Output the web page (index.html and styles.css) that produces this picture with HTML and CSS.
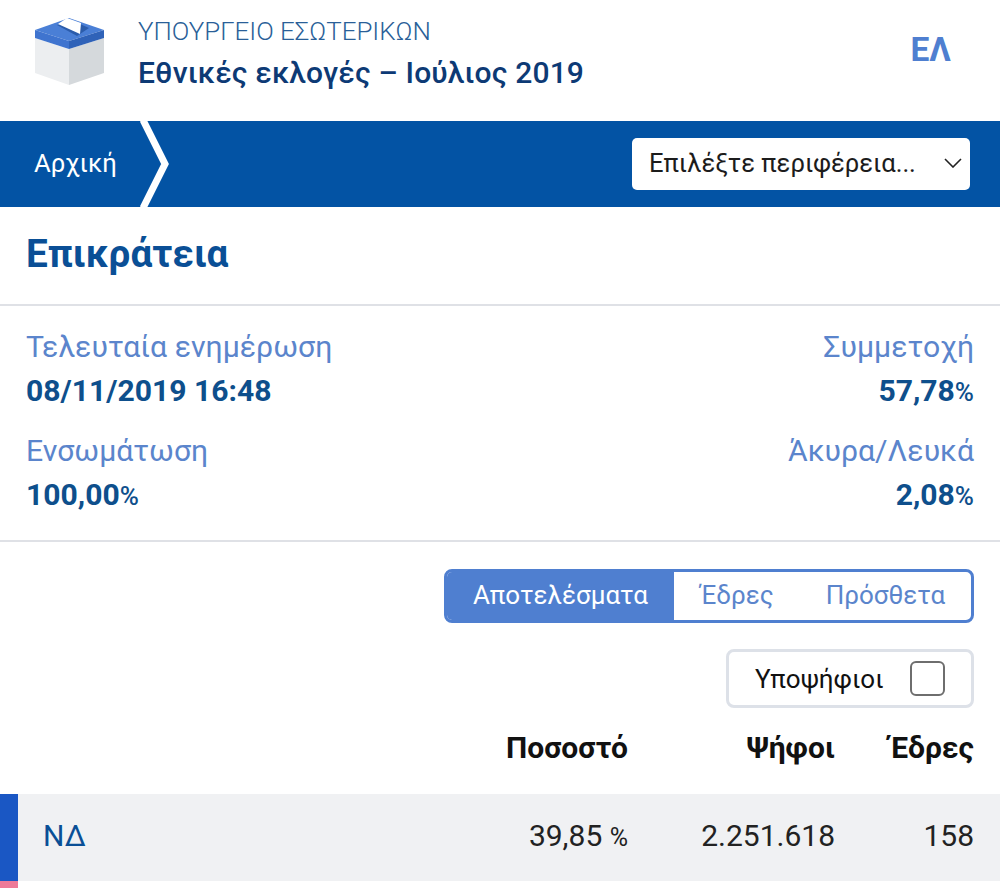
FILE: index.html
```html
<!DOCTYPE html>
<html lang="el">
<head>
<meta charset="utf-8">
<title>Εθνικές εκλογές – Ιούλιος 2019</title>
<link rel="stylesheet" href="styles.css">
</head>
<body>
<header class="top">
  <svg class="logo" width="70" height="90" viewBox="0 0 70 90">
    <path d="M0 38 L34 49 V85 L0 73 Z" fill="#eceef0"/>
    <path d="M34 49 L69 38 V73 L34 85 Z" fill="#d5d9dc"/>
    <path d="M0 30 L34 18 L69 30 L34 41 Z" fill="#4a7fd6"/>
    <path d="M0 30 L34 41 V49 L0 38 Z" fill="#3f74cf"/>
    <path d="M34 41 L69 30 V38 L34 49 Z" fill="#2f62b8"/>
    <path d="M22 25 L36 20 L54 28 L42 36 Z" fill="#2b5cab"/>
    <path d="M23 24 L32 18 L46 23 L45 34 Z" fill="#ffffff"/>
  </svg>
  <div class="brand">
    <div class="ministry">ΥΠΟΥΡΓΕΙΟ ΕΣΩΤΕΡΙΚΩΝ</div>
    <div class="election">Εθνικές εκλογές – Ιούλιος 2019</div>
  </div>
  <div class="lang">ΕΛ</div>
</header>
<nav class="bar">
  <div class="crumb">Αρχική</div>
  <svg class="chevron" width="30" height="86" viewBox="0 0 30 86"><path d="M3 -1 L25 43 L3 87" fill="none" stroke="#fff" stroke-width="7"/></svg>
  <div class="select">
    <span>Επιλέξτε περιφέρεια...</span>
    <svg width="18" height="10" viewBox="0 0 18 10"><path d="M1 1 L9 9 L17 1" fill="none" stroke="#222" stroke-width="1.6"/></svg>
  </div>
</nav>
<section class="title"><h1>Επικράτεια</h1></section>
<section class="stats">
  <div class="stat"><div class="label">Τελευταία ενημέρωση</div><div class="value">08/11/2019 16:48</div></div>
  <div class="stat right"><div class="label">Συμμετοχή</div><div class="value">57,78<small>%</small></div></div>
  <div class="stat"><div class="label">Ενσωμάτωση</div><div class="value">100,00<small>%</small></div></div>
  <div class="stat right"><div class="label">Άκυρα/Λευκά</div><div class="value">2,08<small>%</small></div></div>
</section>
<section class="controls">
  <div class="tabs">
    <div class="tab active">Αποτελέσματα</div>
    <div class="tab second">Έδρες</div>
    <div class="tab third">Πρόσθετα</div>
  </div>
  <div class="check"><span>Υποψήφιοι</span><i class="box"></i></div>
</section>
<div class="thead">
  <div class="c-name"></div>
  <div class="c-pct">Ποσοστό</div>
  <div class="c-votes">Ψήφοι</div>
  <div class="c-seats">Έδρες</div>
</div>
<div class="row nd">
  <div class="c-name">ΝΔ</div>
  <div class="c-pct">39,85 <small>%</small></div>
  <div class="c-votes">2.251.618</div>
  <div class="c-seats">158</div>
</div>
<div class="row next"></div>
</body>
</html>
```
FILE: styles.css
```css
* { box-sizing: border-box; }
html, body { margin: 0; height: 888px; overflow: hidden; background: #fff; }
body { font-family: Roboto, "Noto Sans", sans-serif; color: #111; }

.top { height: 121px; display: flex; align-items: flex-start; padding-left: 35px; }
.logo { flex: none; }
.brand { margin-left: 33px; padding-top: 14px; flex: 1; }
.ministry { font-size: 25.9px; font-weight: 300; color: #2a5f98; line-height: 34px; }
.election { font-size: 30px; font-weight: 500; color: #0d3a75; line-height: 36px; margin-top: 7px; letter-spacing: .15px; }
.lang { font-size: 33.5px; font-weight: 700; color: #4f7fd0; margin: 32px 49px 0 0; line-height: 36px; }

.bar { height: 86px; background: #0353a4; display: flex; align-items: center; color: #fff; }
.crumb { font-size: 25.7px; padding: 0 0 2px 34px; width: 140px; }
.chevron { flex: none; }
.select { margin-left: auto; margin-right: 30px; width: 338px; height: 52px; background: #fff; border-radius: 5px; color: #1c1c1c; display: flex; align-items: center; justify-content: space-between; padding: 0 8px 2px 17px; font-size: 25.6px; }

.title { height: 99px; border-bottom: 2px solid #dfe1e6; padding: 21px 26px 0; }
h1 { margin: 0; font-size: 38.7px; font-weight: 700; line-height: 52px; color: #0a4f96; }

.stats { height: 236px; border-bottom: 2px solid #dfe1e6; padding: 22px 26px 0; display: grid; grid-template-columns: 1fr 1fr; grid-auto-rows: 104px; }
.right { text-align: right; }
.label { font-size: 30.2px; line-height: 38px; color: #5b85cc; }
.value { font-size: 30.1px; font-weight: 700; line-height: 38px; color: #0e4f8c; margin-top: 6px; }
.value small { font-size: 26px; font-weight: 500; }

.controls { padding: 27px 26px 0; display: flex; flex-direction: column; align-items: flex-end; }
.tabs { width: 530px; height: 54px; display: flex; border: 3px solid #4f7fd0; border-radius: 8px; font-size: 26px; color: #5b85cc; overflow: hidden; }
.tab { display: flex; align-items: center; justify-content: center; padding-bottom: 3px; }
.tab.active { width: 227px; background: #4f7fd0; color: #fff; }
.tab.second { width: 126px; }
.tab.third { flex: 1; }
.check { margin-top: 26px; width: 248px; height: 59px; border: 3px solid #dde1e8; border-radius: 8px; display: flex; align-items: center; justify-content: space-between; padding: 0 26px; font-size: 26px; color: #111; }
.box { width: 35px; height: 35px; border: 2px solid #6e6e6e; border-radius: 6px; display: block; }

.thead, .row { display: grid; grid-template-columns: 18px 400px 1fr 207px 139px; padding-right: 26px; text-align: right; align-items: center; }
.thead { height: 86px; font-size: 30px; font-weight: 700; color: #111; padding-bottom: 7px; }
.thead > :first-child, .row > :first-child { grid-column: 2; text-align: left; }
.row { height: 87px; font-size: 30px; color: #222; background: #f0f1f3; border-left: 18px solid #1a57c4; grid-template-columns: 0 400px 1fr 207px 139px; padding-bottom: 5px; }
.row .c-name { color: #0a4f96; padding-left: 25px; }
.row small { font-size: 25px; }
.row.next { background: #fff; border-left-color: #ee7a98; }
```
